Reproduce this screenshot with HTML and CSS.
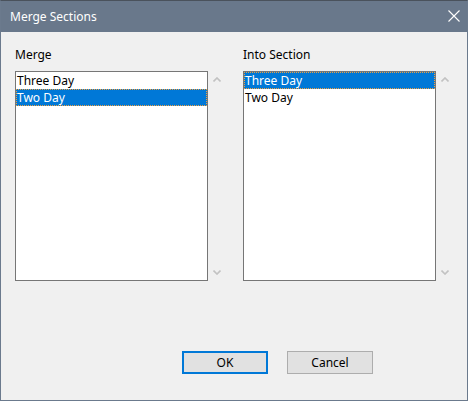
FILE: index.html
```html
<!DOCTYPE html>
<html>
<head>
<meta charset="utf-8">
<link rel="stylesheet" href="styles.css">
</head>
<body>
<div class="window">
  <div class="titlebar">
    <span class="title">Merge Sections</span>
    <svg class="close" width="12" height="12" viewBox="0 0 12 12"><path d="M0.5 0.5 L11.5 11.5 M11.5 0.5 L0.5 11.5" stroke="#fff" stroke-width="1.1" fill="none"/></svg>
  </div>
  <div class="content">
    <div class="columns">
      <div class="column">
        <div class="label">Merge</div>
        <div class="listrow">
          <div class="listbox">
            <div class="item">Three Day</div>
            <div class="item selected">Two Day</div>
          </div>
          <div class="scroll">
            <svg width="8" height="5" viewBox="0 0 8 5"><path d="M0.5 4.5 L4 1 L7.5 4.5" stroke="#c2c2c2" stroke-width="1.6" fill="none"/></svg>
            <svg width="8" height="5" viewBox="0 0 8 5"><path d="M0.5 0.5 L4 4 L7.5 0.5" stroke="#c2c2c2" stroke-width="1.6" fill="none"/></svg>
          </div>
        </div>
      </div>
      <div class="column">
        <div class="label">Into Section</div>
        <div class="listrow">
          <div class="listbox">
            <div class="item selected">Three Day</div>
            <div class="item">Two Day</div>
          </div>
          <div class="scroll">
            <svg width="8" height="5" viewBox="0 0 8 5"><path d="M0.5 4.5 L4 1 L7.5 4.5" stroke="#c2c2c2" stroke-width="1.6" fill="none"/></svg>
            <svg width="8" height="5" viewBox="0 0 8 5"><path d="M0.5 0.5 L4 4 L7.5 0.5" stroke="#c2c2c2" stroke-width="1.6" fill="none"/></svg>
          </div>
        </div>
      </div>
    </div>
    <div class="buttons">
      <button class="btn default">OK</button>
      <button class="btn">Cancel</button>
    </div>
  </div>
</div>
</body>
</html>
```
FILE: styles.css
```css
html, body {
  margin: 0;
  padding: 0;
  background: #f0f0f0;
}
body {
  font-family: "Noto Sans", "Open Sans", sans-serif;
  font-size: 12px;
  color: #000;
}
.window {
  width: 468px;
  height: 401px;
  box-sizing: border-box;
  border: 1px solid #6b7a8d;
  border-top-color: #4a525c;
  display: flex;
  flex-direction: column;
  background: #f0f0f0;
}
.titlebar {
  height: 31px;
  background: #69788b;
  display: flex;
  align-items: center;
  justify-content: space-between;
  padding: 0 7px 0 9px;
  color: #fff;
  flex-shrink: 0;
}
.title {
  font-size: 12px;
  padding-bottom: 1px;
}
.close {
  display: block;
  margin-top: -1px;
}
.content {
  flex: 1;
  display: flex;
  flex-direction: column;
  padding: 14px 0 0 14px;
}
.columns {
  display: flex;
}
.column {
  width: 228px;
  flex-shrink: 0;
  display: flex;
  flex-direction: column;
}
.label {
  height: 17px;
  line-height: 17px;
  margin-left: 0;
  margin-bottom: 8px;
}
.listrow {
  display: flex;
}
.listbox {
  width: 193px;
  height: 210px;
  flex-shrink: 0;
  box-sizing: border-box;
  border: 1px solid #767676;
  background: #fff;
}
.item {
  height: 17px;
  line-height: 17px;
  padding-left: 1px;
  white-space: nowrap;
}
.item.selected {
  background: #0078d7;
  color: #fff;
  outline: 1px dotted #f0a040;
  outline-offset: -1px;
}
.scroll {
  width: 8px;
  margin-left: 5px;
  display: flex;
  flex-direction: column;
  justify-content: space-between;
  padding: 6px 0 6px;
}
.scroll svg {
  display: block;
}
.buttons {
  display: flex;
  gap: 19px;
  margin-top: 70px;
  padding-left: 167px;
}
.btn {
  width: 86px;
  height: 23px;
  box-sizing: border-box;
  border: 1px solid #adadad;
  background: #e1e1e1;
  font-family: "Noto Sans", "Open Sans", sans-serif;
  font-size: 12px;
  color: #000;
  padding: 0;
  margin: 0;
}
.btn.default {
  border: 2px solid #0078d7;
}
```
